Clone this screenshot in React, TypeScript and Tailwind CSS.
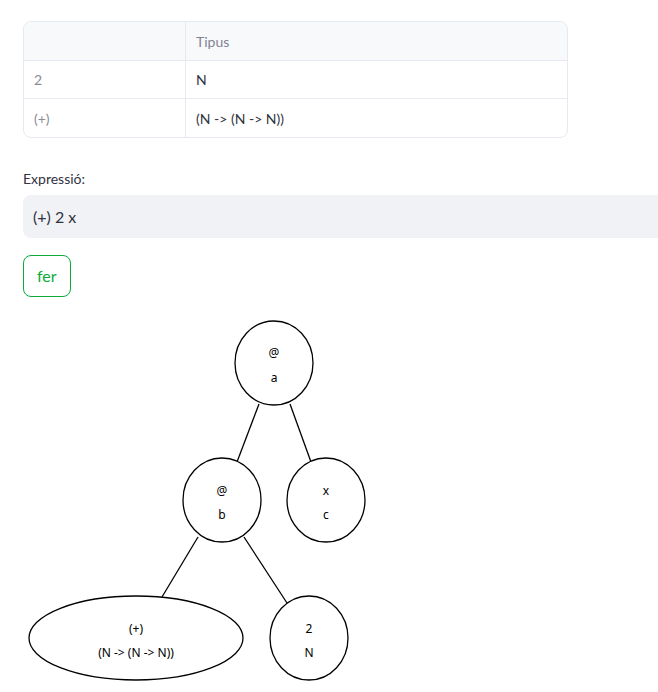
import React from 'react';

const rows = [
  { name: '2', tipus: 'N' },
  { name: '(+)', tipus: '(N -> (N -> N))' },
];

const TypeTable: React.FC = () => (
  <div className="w-[545px] rounded-lg border border-[#e6e9ef] overflow-hidden text-[14px]">
    <div className="grid grid-cols-[162px_1fr] h-[39px] bg-[#f8f9fb] border-b border-[#e6e9ef]">
      <div className="border-r border-[#e6e9ef]" />
      <div className="flex items-center px-[10px] text-[#808495]">Tipus</div>
    </div>
    {rows.map((r, i) => (
      <div
        key={r.name}
        className={
          i === 0
            ? 'grid grid-cols-[162px_1fr] h-[38px] border-b border-[#e6e9ef]'
            : 'grid grid-cols-[162px_1fr] h-[38px]'
        }
      >
        <div className="flex items-center px-[10px] border-r border-[#e6e9ef] text-[#8a8c94]">{r.name}</div>
        <div className="flex items-center px-[10px] text-[#31333f]">{r.tipus}</div>
      </div>
    ))}
  </div>
);

const Tree: React.FC = () => {
  const font = { fontFamily: '"Noto Sans", sans-serif', fontSize: 12 };
  return (
    <svg width="658" height="382" viewBox="0 310 658 382" className="block mt-[13px]">
      <g stroke="#000" strokeWidth="1.3" fill="none">
        <line x1="259" y1="404" x2="237" y2="462" />
        <line x1="290" y1="404" x2="311" y2="462" />
        <line x1="198" y1="537" x2="162" y2="597" />
        <line x1="244" y1="537" x2="287" y2="603" />
        <ellipse cx="274" cy="363" rx="39" ry="42" fill="#fff" />
        <ellipse cx="222" cy="500" rx="39" ry="42" fill="#fff" />
        <ellipse cx="326" cy="500" rx="39" ry="42" fill="#fff" />
        <ellipse cx="136" cy="638" rx="107" ry="42" fill="#fff" />
        <ellipse cx="309" cy="638" rx="39" ry="42" fill="#fff" />
      </g>
      <g fill="#000" textAnchor="middle" style={font}>
        <text x="274" y="357">@</text>
        <text x="274" y="382">a</text>
        <text x="222" y="495">@</text>
        <text x="222" y="519">b</text>
        <text x="326" y="495">x</text>
        <text x="326" y="519">c</text>
        <text x="136" y="633">(+)</text>
        <text x="136" y="657">(N -&gt; (N -&gt; N))</text>
        <text x="309" y="633">2</text>
        <text x="309" y="657">N</text>
      </g>
    </svg>
  );
};

export default function App() {
  return (
    <div className="w-[658px] h-[692px] overflow-hidden bg-white" style={{ fontFamily: 'Lato, "Open Sans", sans-serif' }}>
      <div className="pl-[23px] pt-[21px]">
        <TypeTable />
        <div className="mt-[31px] text-[14px] text-[#31333f] leading-[20px]">Expressió:</div>
        <div className="mt-[6px] h-[43px] w-[660px] rounded-lg bg-[#f0f2f6] flex items-center px-[10px] text-[16px] text-[#31333f]">
          (+) 2 x
        </div>
        <button className="mt-[17px] h-[42px] px-[13px] rounded-lg border border-[#09ab3b] text-[#09ab3b] text-[16px] bg-white">
          fer
        </button>
      </div>
      <Tree />
    </div>
  );
}
